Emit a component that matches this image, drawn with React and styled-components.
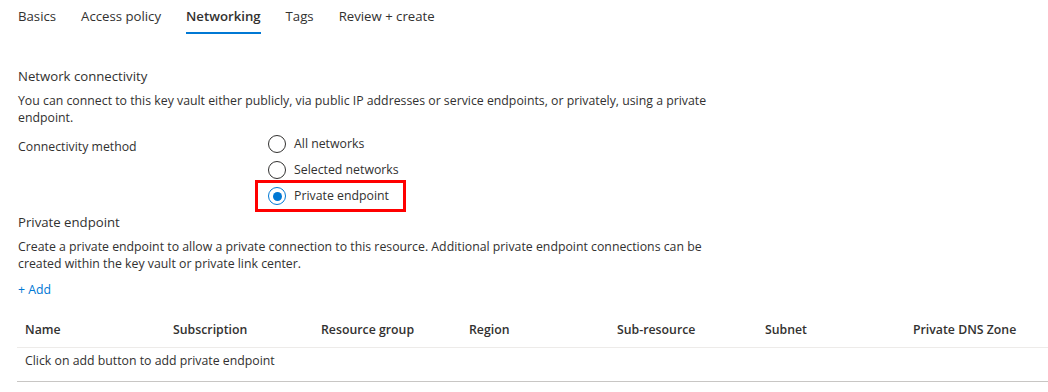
import React, { useState } from 'react';
import styled, { createGlobalStyle } from 'styled-components';

const GlobalStyle = createGlobalStyle`
  body {
    margin: 0;
    background: #fff;
    font-family: 'Open Sans', 'Noto Sans', sans-serif;
    font-size: 12.3px;
    color: #323130;
  }
`;

// Page
const Page = styled.div`
  width: 1048px;
  height: 392px;
  overflow: hidden;
  padding-left: 18px;
  box-sizing: border-box;
`;

// Tabs
const TabBar = styled.div`
  display: flex;
  gap: 25px;
  height: 34px;
`;

const Tab = styled.div`
  padding-top: 7px;
  box-sizing: border-box;
  height: 34px;
  font-size: 13.2px;
  line-height: 18px;
  font-weight: ${p => (p.active ? 600 : 400)};
  color: #323130;
  border-bottom: 2px solid ${p => (p.active ? '#0078d4' : 'transparent')};
  cursor: pointer;
`;

// Sections
const Section = styled.div`
  margin-top: ${p => p.top || 0}px;
`;

const SectionTitle = styled.div`
  font-size: 13.2px;
  line-height: 18px;
`;

const Description = styled.p`
  margin: 7px 0 0;
  width: 700px;
  line-height: 17px;
`;

// Form row
const FormRow = styled.div`
  display: flex;
  margin-top: 9px;
`;

const Label = styled.div`
  width: 250px;
  padding-top: 4px;
  line-height: 16px;
`;

const RadioGroup = styled.div`
  display: flex;
  flex-direction: column;
  gap: 8px;
`;

const RadioItem = styled.label`
  display: flex;
  align-items: center;
  gap: 8px;
  height: 18px;
  line-height: 16px;
  cursor: pointer;
`;

// red annotation box round the chosen option
const Highlight = styled.div`
  border: 3px solid #ff0000;
  margin: -7px 0 -7px -13px;
  padding: 4px 14px 4px 10px;
  width: fit-content;
`;

const Circle = styled.span`
  width: 18px;
  height: 18px;
  box-sizing: border-box;
  border-radius: 50%;
  border: 1px solid ${p => (p.checked ? '#0078d4' : '#323130')};
  display: flex;
  align-items: center;
  justify-content: center;
  &::after {
    content: '';
    width: 9px;
    height: 9px;
    border-radius: 50%;
    background: ${p => (p.checked ? '#0078d4' : 'transparent')};
  }
`;

const AddLink = styled.div`
  margin-top: 10px;
  color: #0078d4;
  line-height: 16px;
  cursor: pointer;
`;

// Table
const Table = styled.div`
  margin-top: 13px;
  margin-left: -1px;
`;

const HeaderRow = styled.div`
  display: grid;
  grid-template-columns: repeat(6, 148px) 1fr;
  height: 36px;
  align-items: center;
  border-bottom: 1px solid #edebe9;
  padding-left: 8px;
`;

const HeaderCell = styled.div`
  font-weight: 600;
`;

const EmptyRow = styled.div`
  height: 34px;
  box-sizing: border-box;
  padding: 5px 0 0 8px;
  line-height: 16px;
  border-bottom: 1px solid #c8c6c4;
`;

const options = ['All networks', 'Selected networks', 'Private endpoint'];
const columns = ['Name', 'Subscription', 'Resource group', 'Region', 'Sub-resource', 'Subnet', 'Private DNS Zone'];
const tabs = ['Basics', 'Access policy', 'Networking', 'Tags', 'Review + create'];

const App = () => {
  const [method, setMethod] = useState('Private endpoint');

  const renderRadio = (opt) => (
    <RadioItem key={opt} onClick={() => setMethod(opt)}>
      <Circle checked={method === opt} />
      {opt}
    </RadioItem>
  );

  return (
    <>
      <GlobalStyle />
      <Page>
        <TabBar>
          {tabs.map(t => (
            <Tab key={t} active={t === 'Networking'}>{t}</Tab>
          ))}
        </TabBar>

        <Section top={33}>
          <SectionTitle>Network connectivity</SectionTitle>
          <Description>
            You can connect to this key vault either publicly, via public IP addresses or service endpoints, or privately, using a private endpoint.
          </Description>
          <FormRow>
            <Label>Connectivity method</Label>
            <RadioGroup>
              {renderRadio(options[0])}
              {renderRadio(options[1])}
              <Highlight>{renderRadio(options[2])}</Highlight>
            </RadioGroup>
          </FormRow>
        </Section>

        <Section top={8}>
          <SectionTitle>Private endpoint</SectionTitle>
          <Description>
            Create a private endpoint to allow a private connection to this resource. Additional private endpoint connections can be created within the key vault or private link center.
          </Description>
          <AddLink>+ Add</AddLink>
        </Section>

        <Table>
          <HeaderRow>
            {columns.map(c => (
              <HeaderCell key={c}>{c}</HeaderCell>
            ))}
          </HeaderRow>
          <EmptyRow>Click on add button to add private endpoint</EmptyRow>
        </Table>
      </Page>
    </>
  );
};

export default App;
